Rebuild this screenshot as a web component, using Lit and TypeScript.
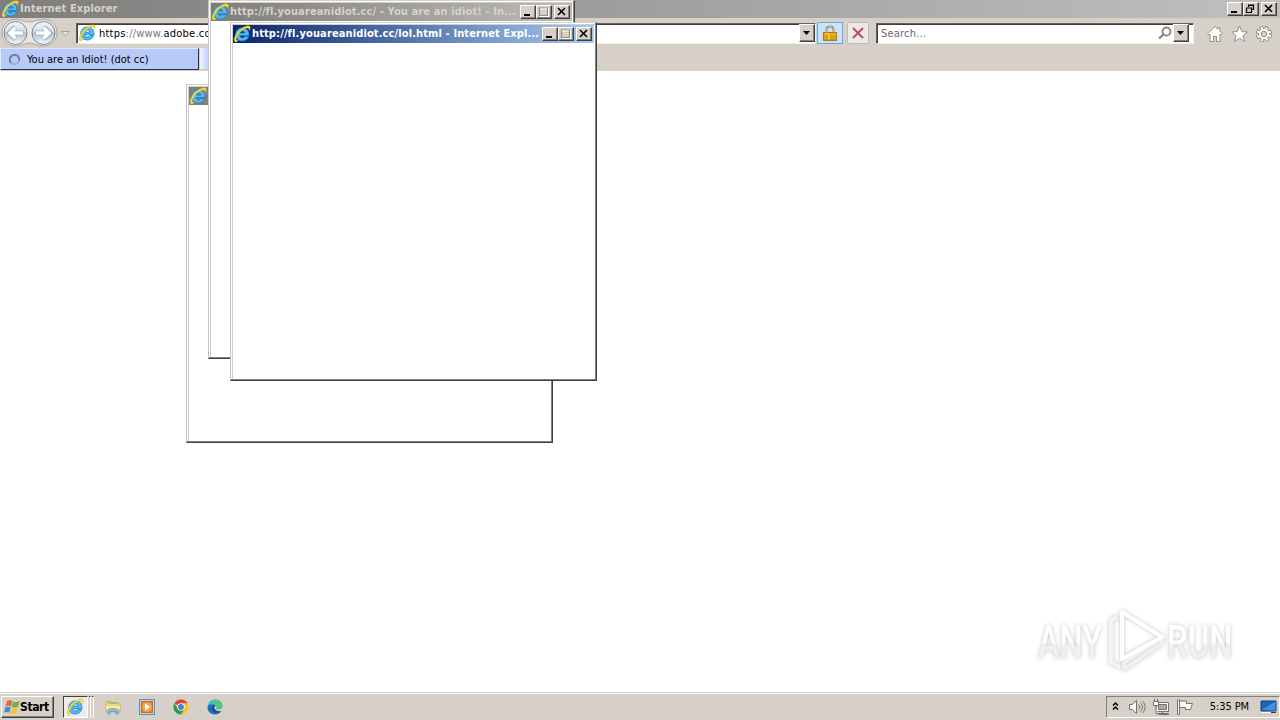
import { LitElement, html, css, svg } from 'lit';
import { customElement, property } from 'lit/decorators.js';

const ieIcon = html`
  <svg class="ie" viewBox="0 0 18 18">
    <path d="M15.6 11.6C14.6 14.5 12.300 16 9.400 16C5.500 16 2.700 13.400 2.700 9.500C2.700 5.600 5.600 2.900 9.500 2.900C13.800 2.900 16.300 6 16 10.600H6.900C7.100 12.200 8.100 13 9.700 13C10.700 13 11.400 12.500 11.800 11.600ZM7 8.100H11.900C11.700 6.600 10.900 5.900 9.500 5.900C8.100 5.900 7.200 6.700 7 8.100Z" fill="#4fbdf3" stroke="#1c7fc4" stroke-width=".8" fill-rule="evenodd"/>
    <path d="M2.200 17C-1 14.800 3.600 6.100 10.300 2.300C13.300 .600 16.600 0 17.200 1.800C17.600 3 17 4.400 16.200 5.600C16.200 3.200 15 2.600 12.400 3.500C7.700 5.200 3.600 10.500 3.300 13.800C3.200 15.100 3.900 15.700 5.400 15.300C4.200 16.600 3.200 17.400 2.200 17Z" fill="#f8dc3c" stroke="#d0aa22" stroke-width=".3"/>
  </svg>`;

@customElement('caption-button')
export class CaptionButton extends LitElement {
  @property()
  kind = "close";

  @property({type: Boolean})
  faded = false;

  static styles = css`
    :host{
      display: flex;
      align-items: center;
      box-sizing: border-box;
      width: 16px;
      height: 14px;
      background: #d6d0c8;
      border: 1px solid;
      border-color: #fff #404040 #404040 #fff;
      box-shadow: inset -1px -1px #85817b;
    }
    svg{ display: block; width: 14px; height: 12px; fill: none; stroke: #000; }
    .faded{ stroke: #918d87; }
  `

  glyph(){
    switch(this.kind){
      case "min": return svg`<path d="M3 9H9" stroke-width="2"/>`;
      case "max": return svg`<path d="M2.500 2V9.500H10.500V2M2 2H11" stroke-width="1.200"/><path d="M3 3H10M11.500 2V10.500H3" stroke="#fff" stroke-width="1"/>`;
      case "restore": return svg`<path d="M4.500 4V2.500H9.500V6.500H8M2.500 5V9.500H7.500V5M4 2H10M2 5H8" stroke-width="1.200"/>`;
      case "drop": return svg`<path d="M3 4H10L6.500 8Z" fill="#000" stroke="none"/>`;
      default: return svg`<path d="M3 2L10 9M10 2L3 9" stroke-width="1.600"/>`;
    }
  }

  render(){
    return html`<svg class=${this.faded ? "faded" : ""} viewBox="0 0 14 12">${this.glyph()}</svg>`;
  }
}

@customElement('popup-window')
export class PopupWindow extends LitElement {
  @property()
  caption = "";

  @property({type: Boolean, reflect: true})
  active = false;

  static styles = css`
    :host{
      display: block;
      box-sizing: border-box;
      width: 367px;
      height: 359px;
      background: #fff;
      border: 1px solid;
      border-color: #d4d0c8 #404040 #404040 #c4c2be;
      box-shadow: inset -1px -1px #808080, inset 1px 1px #fff, inset 2px 2px #d0cec9;
      padding: 2px;
    }
    .bar{
      display: flex;
      align-items: center;
      height: 18px;
      background: linear-gradient(90deg, #7f7e7c, #bdbbb6);
      color: #d6d2ca;
      font: bold 11px/18px "DejaVu Sans Condensed", "DejaVu Sans", sans-serif;
      padding-right: 2px;
    }
    :host([active]) .bar{
      background: linear-gradient(90deg, #0a246a, #a6caf0);
      color: #fff;
    }
    .ie{ width: 18px; height: 18px; flex: none; margin-right: 1px; }
    .caption{ flex: 1; white-space: nowrap; letter-spacing: .12px; }
    .close{ margin-left: 2px; }
  `

  render(){
    return html`
      <div class="bar">
        ${ieIcon}
        <span class="caption">${this.caption}</span>
        <caption-button kind="min"></caption-button>
        <caption-button kind="max" faded></caption-button>
        <caption-button class="close" kind="close"></caption-button>
      </div>
    `
  }
}

@customElement('app-root')
export class AppRoot extends LitElement {
  static styles = css`
    :host{
      display: flex;
      flex-direction: column;
      position: relative;
      width: 1280px;
      height: 720px;
      overflow: hidden;
      background: #fff;
      color: #000;
      font: 11px/14px "DejaVu Sans Condensed", "DejaVu Sans", sans-serif;
      white-space: nowrap;
    }
    svg{ display: block; flex: none; }
    .title{
      display: flex;
      align-items: center;
      box-sizing: border-box;
      height: 18px;
      padding: 0 3px 0 1px;
      background: linear-gradient(90deg, #7f7e7c, #c0c0c0);
      color: #d6d2ca;
      font-weight: bold;
    }
    .title .ie{ width: 18px; height: 18px; margin-right: 1px; }
    .title .name{ flex: 1; letter-spacing: .1px; }
    .title .close{ margin-left: 2px; }
    .nav{
      display: flex;
      align-items: center;
      box-sizing: border-box;
      height: 30px;
      background: #d6d0c8;
    }
    .arrows{ width: 76px; height: 30px; }
    .field{
      display: flex;
      align-items: center;
      box-sizing: border-box;
      height: 21px;
      background: #fff;
      border: 1px solid;
      border-color: #65625e #f2f0ec #f2f0ec #65625e;
      box-shadow: inset 1px 1px #3f3e3c;
    }
    .address{ width: 740px; padding-left: 1px; }
    .address .ie{ width: 18px; height: 18px; margin-right: 3px; }
    .url{ flex: 1; letter-spacing: .22px; padding-top: 2px; }
    .dim{ color: #777; }
    .drop{ height: 18px; }
    .tool{
      display: flex;
      align-items: center;
      justify-content: center;
      box-sizing: border-box;
      height: 22px;
    }
    .lock{ width: 26px; margin-left: 1px; background: #cce2fa; border: 1px solid #6aa7df; }
    .stop{ width: 22px; margin-left: 4px; background: #ebe9e9; border: 1px solid #bfbcb8; border-radius: 2px; }
    .search{ width: 318px; margin-left: 7px; padding: 0 4px 0 4px; }
    .search span{ flex: 1; color: #696969; letter-spacing: .2px; padding-top: 2px; }
    .search svg{ margin-right: 1px; }
    .links{ margin-left: 13px; margin-top: 2px; width: 66px; height: 20px; }
    .tabs{ display: flex; height: 23px; background: #d6d0c8; }
    .tab{
      display: flex;
      align-items: center;
      box-sizing: border-box;
      width: 199px;
      height: 22px;
      padding-left: 7px;
      background: #b8cafa;
      border: 1px solid;
      border-color: #dfe7fd #26304c #26304c #e8edfb;
    }
    .tab svg{ margin-right: 6px; }
    .tab span{ padding-top: 2px; }
    .newtab{ width: 10px; height: 21px; margin-left: 1px; background: linear-gradient(90deg, #f2f4ff, #b8cafa); }
    .page{ flex: 1; }
    .popup{ position: absolute; }
    .first{ left: 186px; top: 84px; }
    .second{ left: 208px; top: 0; }
    .third{ left: 230px; top: 22px; }
    .mark{
      position: absolute;
      left: 1030px;
      top: 602px;
      width: 210px;
      height: 76px;
      overflow: visible;
      filter: drop-shadow(0 0 2px #c4c4c4);
    }
    .mark text{ font: 500 47px Roboto, "Liberation Sans", sans-serif; }
    .taskbar{
      display: flex;
      align-items: center;
      box-sizing: border-box;
      height: 28px;
      padding-left: 1px;
      background: #d6d0c8;
      border-top: 1px solid #d6d0c8;
      box-shadow: inset 0 1px #fff;
    }
    .start{
      display: flex;
      align-items: center;
      box-sizing: border-box;
      width: 53px;
      height: 22px;
      padding-left: 2px;
      border: 1px solid;
      border-color: #fff #404040 #404040 #fff;
      box-shadow: inset -1px -1px #85817b;
      font-weight: bold;
      font-size: 12px;
      letter-spacing: -.4px;
    }
    .start svg{ margin-right: -1px; }
    .running{
      display: flex;
      align-items: center;
      box-sizing: border-box;
      width: 25px;
      height: 22px;
      padding-left: 2px;
      margin-left: 9px;
      border: 1px solid;
      border-color: #404040 #fff #fff #404040;
      background: #efece8;
    }
    .running .ie{ width: 18px; height: 18px; }
    .stack{ box-sizing: border-box; width: 2px; height: 22px; border-right: 1px solid #fff; border-top: 1px solid #404040; margin-left: 1px; }
    .pins{ display: flex; gap: 18px; margin-left: 11px; flex: 1; }
    .tray{
      display: flex;
      align-items: center;
      box-sizing: border-box;
      width: 174px;
      height: 22px;
      border: 1px solid;
      border-color: #85817b #fff #fff #85817b;
    }
    .clock{ flex: 1; text-align: right; padding-right: 10px; letter-spacing: -.1px; }
  `

  renderNav(){
    return html`
      <div class="nav">
        <svg class="arrows" viewBox="0 18 76 30">
          <defs>
            <linearGradient id="ball" x2="0" y2="1">
              <stop offset="0" stop-color="#f3f6f9"/><stop offset=".45" stop-color="#d5dee8"/>
              <stop offset=".5" stop-color="#b4c1cf"/><stop offset="1" stop-color="#f5faff"/>
            </linearGradient>
          </defs>
          <path d="M15 19.500C22 19.500 24 22 29 22S37 19.500 44 19.500C52 19.500 57 26 57 33S51 46 44 46C37 46 34 43 29 43S22 46 15 46C7 46 2 40 2 33S7 19.500 15 19.500Z" fill="#e9e7e4" stroke="#aaa8a4"/>
          <g fill="url(#ball)" stroke="#7c8792">
            <circle cx="15.500" cy="33" r="11.500"/><circle cx="43.500" cy="33" r="11.500"/>
          </g>
          <g stroke="#9aa7b6" stroke-width="5" fill="none">
            <path d="M23.500 33H11M15.500 27L9.500 33L15.500 39"/><path d="M35.500 33H48M43.500 27L49.500 33L43.500 39"/>
          </g>
          <g stroke="#fff" stroke-width="3.600" fill="none">
            <path d="M23 33H11M15.500 27.500L10 33L15.500 38.500"/><path d="M36 33H48M43.500 27.500L49 33L43.500 38.500"/>
          </g>
          <path d="M61.500 31.500H69.500L65.500 36Z" fill="#e8e5e0" stroke="#a6a29b"/>
        </svg>
        <div class="field address">
          ${ieIcon}
          <span class="url">https<span class="dim">://www.</span>adobe.com</span>
          <caption-button class="drop" kind="drop"></caption-button>
        </div>
        <div class="tool lock">
          <svg width="14" height="17" viewBox="0 0 14 17">
            <path d="M3.500 8V4.500C3.500 .500 10.500 .500 10.500 4.500V8" fill="none" stroke="#94834d" stroke-width="2"/>
            <path d="M3.500 8V4.500C3.500 .500 10.500 .500 10.500 4.500V8" fill="none" stroke="#e8dfb0" stroke-width=".7"/>
            <rect x=".5" y="7.500" width="13" height="8" fill="#e8ae20" stroke="#b17b12"/>
            <path d="M1 9H7M1 12H13M1 14.500H13" stroke="#c48b14"/>
            <path d="M2 8.500H6V15" fill="none" stroke="#ffdc63"/>
          </svg>
        </div>
        <div class="tool stop">
          <svg width="12" height="12" viewBox="0 0 12 12"><path d="M1 1L11 11M11 1L1 11" stroke="#c04a50" stroke-width="1.900"/></svg>
        </div>
        <div class="field search">
          <span>Search...</span>
          <svg width="14" height="16" viewBox="0 0 14 16" fill="none" stroke="#858585">
            <circle cx="8.500" cy="6.500" r="4" stroke-width="1.800"/><path d="M5.500 9.500L1 13.500" stroke-width="2.300"/>
          </svg>
          <caption-button class="drop" kind="drop"></caption-button>
        </div>
        <svg class="links" viewBox="1207 25 66 20" fill="#fff" stroke="#918e8a">
          <path d="M1215 27.500L1207.700 34.500L1209 36L1210 35.200V42.500H1213.500V37.500H1216.500V42.500H1220V35.200L1221 36L1222.300 34.500L1219.800 32V28.500H1217.800V30.200Z"/>
          <path d="M1239.500 27L1241.800 32.500L1247.300 33L1243 36.700L1244.500 42.500L1239.500 39.400L1234.500 42.500L1236 36.700L1231.700 33L1237.200 32.500Z"/>
          <circle cx="1264" cy="35" r="6.200" stroke-width="4" stroke-dasharray="3.400 1.470" fill="none"/>
          <circle cx="1264" cy="35" r="5.600"/>
          <circle cx="1264" cy="35" r="6" stroke="#fff" stroke-width="2.600" stroke-dasharray="2 2.712" stroke-dashoffset="-.7" fill="none"/>
          <circle cx="1264" cy="35" r="2.800" fill="#d6d0c8"/>
        </svg>
      </div>
    `
  }

  renderTaskbar(){
    return html`
      <div class="taskbar">
        <div class="start">
          <svg width="17" height="16" viewBox="0 0 17 16">
            <path d="M3 2C5 .8 7 1 8.500 2L7 7.500C5.500 6.600 3.500 6.500 1.500 7.500Z" fill="#e8643a"/>
            <path d="M9.300 2.400C11 3.400 13.500 3.400 15.800 2L14.200 7.500C12 8.700 9.600 8.700 7.800 7.800Z" fill="#6fb243"/>
            <path d="M1.200 8.400C3.200 7.400 5.200 7.500 6.700 8.400L5.200 13.800C3.600 12.700 2 12.800 0 13.600Z" fill="#3f8fd0"/>
            <path d="M7.500 8.800C9.500 9.800 11.600 9.700 14 8.600L12.500 14C10.300 15.200 7.900 15.200 6 14.200Z" fill="#f7c52e"/>
          </svg>
          <span>Start</span>
        </div>
        <div class="running">${ieIcon}</div>
        <div class="stack"></div>
        <div class="stack"></div>
        <div class="pins">
          <svg width="16" height="16" viewBox="0 0 16 16">
            <path d="M1 2.500H6L7.500 4H15V13H1Z" fill="#f1d577" stroke="#c9a54b" stroke-width=".7"/>
            <path d="M3 4H12" stroke="#5eb46a"/><path d="M1 7H15V10H1Z" fill="#f9e8a4"/>
            <path d="M3 15V11.500C3 9 13 9 13 11.500V15H11V12.500H5V15Z" fill="#88c6e7" stroke="#4c91bb" stroke-width=".7"/>
          </svg>
          <svg width="16" height="16" viewBox="0 0 16 16">
            <rect x=".5" y=".5" width="15" height="15" fill="#b9d9ef" stroke="#4b94c7"/>
            <rect x="2.500" y="2.500" width="11" height="11" fill="#f1861f" stroke="#d4680e"/>
            <circle cx="8" cy="8" r="4.800" fill="#f7a244"/><path d="M6 4.500L11.500 8L6 11.500Z" fill="#fff"/>
          </svg>
          <svg width="16" height="16" viewBox="0 0 16 16">
            <circle cx="8" cy="8" r="7.500" fill="#f9c723"/>
            <path d="M8 8L1.500 4.250A7.500 7.500 0 0 1 14.500 4.250H8Z" fill="#dd4436"/>
            <path d="M1.500 4.250A7.500 7.500 0 0 0 8 15.500L11.200 9.900L4.800 9.900Z" fill="#249d58"/>
            <circle cx="8" cy="8" r="3.700" fill="#fff"/><circle cx="8" cy="8" r="2.900" fill="#3f7de8"/>
          </svg>
          <svg width="16" height="16" viewBox="0 0 16 16">
            <path d="M.5 8C.8 3.500 4 .5 8 .5C12.500 .5 15.500 3.500 15.500 6.800C15.500 9.300 13.500 10.500 11.500 10.500C9.700 10.500 9 9.700 9.300 9C10.500 6.500 7.500 5 5 5.300C3 5.500 1.300 6.500 .5 8Z" fill="#39bfc2"/>
            <path d="M8 .5C12.500 .5 15.500 3.500 15.500 6.800C15.500 9.300 13.500 10.500 11.500 10.500C9.700 10.500 9 9.700 9.300 9C10.500 6.500 8 4 6 3.500Z" fill="#55c77c"/>
            <path d="M.5 8C1 5.800 3.500 4.500 6 5C4.500 6.500 4.500 9.500 6.500 11.500C8.500 13.500 12 13.500 14.500 12C13 14.300 10.800 15.500 8 15.500C3.600 15.500 .3 12.200 .5 8Z" fill="#1673bd"/>
            <path d="M6 5.500C4 7.500 4.200 11 6.500 13C8.500 14.500 12 14 14.500 12C11 13 8 11.500 7.500 9C7.300 7.500 8 6.700 9 6.700C8.300 5.800 7.200 5.400 6 5.500Z" fill="#174f95"/>
          </svg>
        </div>
        <div class="tray">
          <svg width="96" height="20" viewBox="1107 697 96 20" fill="#f9f8f6" stroke="#737373">
            <path d="M1113 705.500L1115.500 703L1118 705.500M1113 709.500L1115.500 707L1118 709.500" fill="none" stroke="#000" stroke-width="1.500"/>
            <path d="M1129.500 704.500H1132L1136.500 700.500V713.500L1132 709.500H1129.500Z"/>
            <path d="M1138.500 704.500C1140 706 1140 708 1138.500 709.500M1140.500 702.500C1143 705.500 1143 708.500 1140.500 711.500M1142.500 701C1146 705 1146 709.500 1142.500 713" fill="none"/>
            <path d="M1156.500 702.500H1168.500V711.500H1156.500ZM1158.500 713.500H1168.500V714.500H1158.500ZM1162.500 711.500V714"/>
            <path d="M1158.500 704.500H1166.500V709.500H1158.500Z" fill="#aaa"/>
            <path d="M1153.500 701.500H1158.500V705.500H1153.500ZM1154.500 701V699M1157.500 701V699M1156 706V713.500H1158"/>
            <path d="M1177.500 700V714.500H1179.500V700ZM1179.500 701H1186.500V703.500H1192.500L1190.500 709.500H1185.500V707.500H1179.500Z"/>
          </svg>
          <span class="clock">5:35 PM</span>
          <svg width="20" height="18" viewBox="0 0 20 18">
            <path d="M2 3H17V13H2Z" fill="#1c65bb" stroke="#174075"/><path d="M2.500 12L16.500 3.500V12.500Z" fill="#3e92dc"/><path d="M2 14.500H12" stroke="#f8f8f8"/><path d="M12 14.500H17" stroke="#263c5b"/>
          </svg>
        </div>
      </div>
    `
  }

  render(){
    return html`
      <div class="title">
        ${ieIcon}
        <span class="name">Internet Explorer</span>
        <caption-button kind="min"></caption-button>
        <caption-button kind="restore"></caption-button>
        <caption-button class="close" kind="close"></caption-button>
      </div>
      ${this.renderNav()}
      <div class="tabs">
        <div class="tab">
          <svg width="13" height="13" viewBox="0 0 13 13" fill="none" stroke-width="2">
            <circle cx="6.500" cy="6.500" r="4.700" stroke="#9aabd6"/><path d="M3 9.700A4.700 4.700 0 1 1 11 7.500" stroke="#6f82a8"/>
          </svg>
          <span>You are an Idiot! (dot cc)</span>
        </div>
        <div class="newtab"></div>
      </div>
      <div class="page"></div>
      ${this.renderTaskbar()}

      <popup-window class="popup first"></popup-window>
      <popup-window class="popup second" caption="http://fl.youareanidiot.cc/ - You are an idiot! - In..."></popup-window>
      <popup-window class="popup third" active caption="http://fl.youareanidiot.cc/lol.html - Internet Expl..."></popup-window>

      <svg class="mark" viewBox="1030 602 210 76">
        <defs>
          <linearGradient id="fade" x2="0" y2="1">
            <stop offset=".5" stop-color="#fff"/><stop offset=".55" stop-color="#f0f0f0"/>
          </linearGradient>
        </defs>
        <g fill="url(#fade)">
          <text transform="translate(1038 658) scale(.72 1)" textLength="89" lengthAdjust="spacingAndGlyphs">ANY</text>
          <text transform="translate(1167 658) scale(.72 1)" textLength="91" lengthAdjust="spacingAndGlyphs">RUN</text>
        </g>
        <g fill="none" stroke="#fff" stroke-width="4" stroke-linejoin="round">
          <path d="M1162 636V643L1124 669V663L1160 639" stroke="#f0f0f0"/>
          <path d="M1122 659V612L1162 637Z"/>
          <path d="M1117 617L1111 620V662L1120 667" stroke="#f5f5f5"/>
        </g>
      </svg>
    `
  }
}
